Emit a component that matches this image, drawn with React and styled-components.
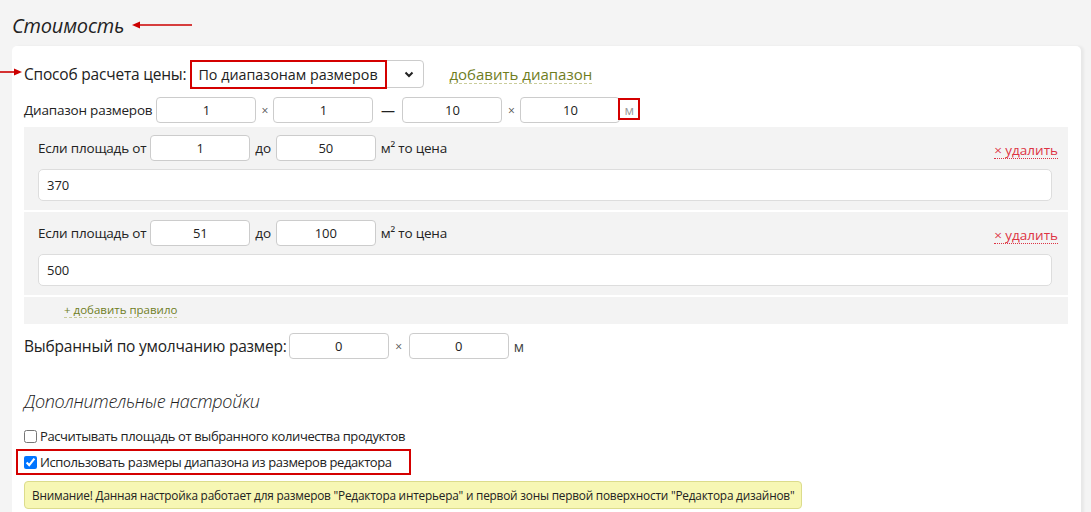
import React from 'react'
import styled, { createGlobalStyle } from 'styled-components'

const Global = createGlobalStyle`
  body {
    margin: 0;
    background: #f4f4f4;
    font-family: "Open Sans", "Noto Sans", sans-serif;
    color: #222;
  }
`

const Page = styled.div`
  padding: 12px 10px 0 12px;
  height: 512px;
  box-sizing: border-box;
  overflow: hidden;
`

const TitleRow = styled.div`
  display: flex;
  align-items: center;
  gap: 8px;
  height: 26px;
  margin-bottom: 8px;
`

const Title = styled.h2`
  margin: 0;
  font-size: 20px;
  font-weight: 400;
  font-style: italic;
  letter-spacing: -0.2px;
`

const Arrow = styled.svg`
  display: block;
  flex: none;
`

const Card = styled.div`
  position: relative;
  background: #fff;
  border-radius: 5px;
  box-shadow: 3px 0 3px rgba(0, 0, 0, 0.05);
  padding: 14px 13px 20px 12px;
`

const Row = styled.div`
  display: flex;
  align-items: center;
  gap: ${p => p.$gap ?? 8}px;
  margin-bottom: ${p => p.$mb ?? 0}px;
  margin-top: ${p => p.$mt ?? 0}px;
`

const Label = styled.span`
  font-size: ${p => p.$size || 14}px;
  white-space: nowrap;
  letter-spacing: -0.2px;
  margin-right: ${p => p.$mr ?? 0}px;
  margin-left: ${p => p.$ml ?? 0}px;
  color: ${p => p.$color || '#222'};
`

const SideArrow = styled.div`
  position: absolute;
  left: -12px;
  top: 21px;
`

const Select = styled.div`
  position: relative;
  width: 234px;
  height: 28px;
  box-sizing: border-box;
  border: 1px solid #ccc;
  border-radius: 4px;
  display: flex;
  align-items: center;
  justify-content: space-between;
  padding: 0 8px 0 7px;
  font-size: 14.3px;
  margin-left: 4px;
`

const Marker = styled.div`
  position: absolute;
  border: 2px solid #d40000;
  left: ${p => p.$l}px;
  top: ${p => p.$t}px;
  width: ${p => p.$w}px;
  height: ${p => p.$h}px;
  box-sizing: border-box;
  pointer-events: none;
`

const Link = styled.span`
  color: #6f7d1e;
  font-size: ${p => p.$size || 15}px;
  border-bottom: 1px dashed #c9cc9a;
  line-height: 1.2;
  margin-left: ${p => p.$ml ?? 0}px;
  white-space: nowrap;
`

const Input = styled.div`
  width: 100px;
  height: 26px;
  box-sizing: border-box;
  border: 1px solid #ccc;
  border-radius: 4px;
  background: #fff;
  display: flex;
  align-items: center;
  justify-content: center;
  font-size: 13px;
  flex: none;
`

const Sep = styled.span`
  font-size: ${p => p.$size || 12}px;
  color: ${p => p.$color || '#555'};
  width: ${p => p.$w}px;
  flex: none;
  text-align: center;
`

const Unit = styled.span`
  position: relative;
  font-size: 13px;
  color: #999;
  padding: 0 4px;
`

const Rules = styled.div`
  background: #f3f3f3;
  margin-top: 4px;
`

const Rule = styled.div`
  padding: 8px 10px 9px 14px;
  border-bottom: 2px solid #fff;
`

const RuleHead = styled.div`
  display: flex;
  align-items: center;
  gap: 5px;
  margin-bottom: 8px;
`

const Remove = styled.span`
  margin-left: auto;
  color: #dd3344;
  font-size: 13.5px;
  border-bottom: 1px dotted #dd3344;
  line-height: 1.1;
  margin-top: 6px;
`

const Price = styled.div`
  height: 32px;
  box-sizing: border-box;
  border: 1px solid #ddd;
  border-radius: 5px;
  background: #fff;
  display: flex;
  align-items: center;
  padding: 0 8px;
  font-size: 13px;
  margin-right: 6px;
`

const AddRule = styled.div`
  height: 27px;
  display: flex;
  align-items: center;
  padding-left: 40px;
`

const SubTitle = styled.h3`
  margin: 30px 0 10px;
  font-size: 18px;
  font-weight: 300;
  font-style: italic;
  letter-spacing: -0.3px;
`

const Check = styled.label`
  position: relative;
  display: flex;
  align-items: center;
  gap: 3px;
  font-size: 13px;
  height: 26px;
  letter-spacing: -0.4px;
  input {
    margin: 0;
    width: 13px;
    height: 13px;
  }
`

const Alert = styled.div`
  display: inline-block;
  margin-top: 6px;
  background: #f7f7b4;
  border: 1px solid #dcdc8c;
  border-radius: 4px;
  padding: 5px 7px;
  font-size: 11.8px;
  letter-spacing: -0.2px;
  color: #222;
`

const RedArrow = () => (
  <Arrow width="60" height="10" viewBox="0 0 60 10">
    <line x1="6" y1="5" x2="60" y2="5" stroke="#cc0000" strokeWidth="1.6" />
    <path d="M0 5 L8 1.5 L8 8.5 Z" fill="#cc0000" />
  </Arrow>
)

const RightArrow = () => (
  <Arrow width="22" height="10" viewBox="0 0 22 10">
    <line x1="0" y1="5" x2="16" y2="5" stroke="#cc0000" strokeWidth="1.6" />
    <path d="M22 5 L14 1.5 L14 8.5 Z" fill="#cc0000" />
  </Arrow>
)

const rules = [
  { from: 1, to: 50, price: 370 },
  { from: 51, to: 100, price: 500 },
]

export default function App() {
  return (
    <Page>
      <Global />
      <TitleRow>
        <Title>Стоимость</Title>
        <RedArrow />
      </TitleRow>
      <Card>
        <SideArrow><RightArrow /></SideArrow>
        <Row $gap={0} $mb={9}>
          <Label $size={15.5}>Способ расчета цены:</Label>
          <Select>
            <span>По диапазонам размеров</span>
            <svg width="12" height="12" viewBox="0 0 12 12">
              <path d="M2.5 4.5 L6 8 L9.5 4.5" fill="none" stroke="#222" strokeWidth="2" />
            </svg>
            <Marker $l={-1} $t={-1} $w={197} $h={29} />
          </Select>
          <Link $ml={25}>добавить диапазон</Link>
        </Row>
        <Row $gap={0}>
          <Label $size={13.5} $mr={4}>Диапазон размеров</Label>
          <Input>1</Input>
          <Sep $w={17}>×</Sep>
          <Input>1</Input>
          <Sep $w={29} $size={14} $color="#222">—</Sep>
          <Input>10</Input>
          <Sep $w={18}>×</Sep>
          <Input>10</Input>
          <Unit>м<Marker $l={-2} $t={-3} $w={22} $h={22} /></Unit>
        </Row>
        <Rules>
          {rules.map(r => (
            <Rule key={r.from}>
              <RuleHead>
                <Label $size={13.5} $mr={-1}>Если площадь от</Label>
                <Input>{r.from}</Input>
                <Label $size={13.5}>до</Label>
                <Input>{r.to}</Input>
                <Label $size={13.5}>м² то цена</Label>
                <Remove>× удалить</Remove>
              </RuleHead>
              <Price>{r.price}</Price>
            </Rule>
          ))}
          <AddRule>
            <Link $size={11.5}>+ добавить правило</Link>
          </AddRule>
        </Rules>
        <Row $gap={0} $mt={9}>
          <Label $size={15.5} $mr={2}>Выбранный по умолчанию размер:</Label>
          <Input>0</Input>
          <Sep $w={20}>×</Sep>
          <Input>0</Input>
          <Label $size={14} $ml={5} $color="#444">м</Label>
        </Row>
        <SubTitle>Дополнительные настройки</SubTitle>
        <Check>
          <input type="checkbox" readOnly />
          Расчитывать площадь от выбранного количества продуктов
        </Check>
        <Check>
          <input type="checkbox" checked readOnly />
          Использовать размеры диапазона из размеров редактора
          <Marker $l={-8} $t={0} $w={395} $h={26} />
        </Check>
        <Alert>
          Внимание! Данная настройка работает для размеров "Редактора интерьера" и первой зоны первой поверхности "Редактора дизайнов"
        </Alert>
      </Card>
    </Page>
  )
}
